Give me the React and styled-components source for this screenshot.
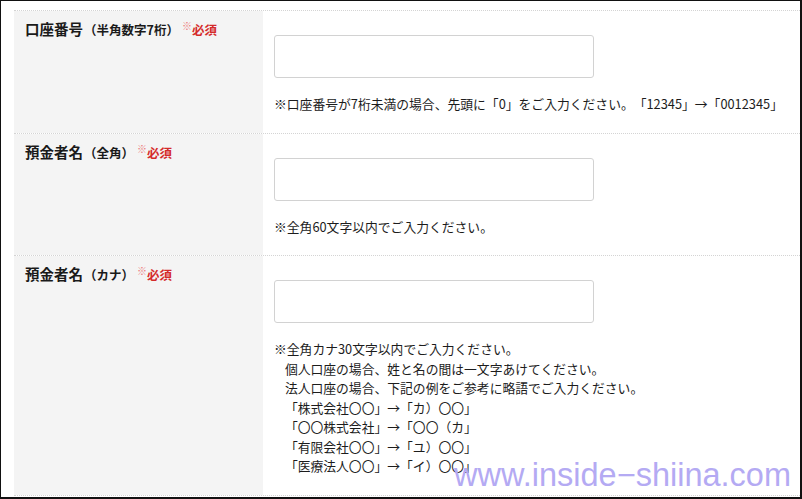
import React from 'react'
import styled, { createGlobalStyle } from 'styled-components'

const GlobalStyle = createGlobalStyle`
  html, body {
    margin: 0;
    padding: 0;
    background: #fff;
  }
  body {
    font-family: "Noto Sans CJK JP", "Noto Sans", sans-serif;
    color: #222;
    text-spacing-trim: space-all;
  }
`

const fields = [
  {
    id: 'number',
    label: '口座番号',
    sub: '（半角数字7桁）',
    notes: ['※口座番号が7桁未満の場合、先頭に「0」をご入力ください。「12345」→「0012345」'],
  },
  {
    id: 'kanji',
    label: '預金者名',
    sub: '（全角）',
    notes: ['※全角60文字以内でご入力ください。'],
  },
  {
    id: 'kana',
    label: '預金者名',
    sub: '（カナ）',
    notes: [
      '※全角カナ30文字以内でご入力ください。',
      '個人口座の場合、姓と名の間は一文字あけてください。',
      '法人口座の場合、下記の例をご参考に略語でご入力ください。',
      '「株式会社〇〇」→「カ）〇〇」',
      '「〇〇株式会社」→「〇〇（カ」',
      '「有限会社〇〇」→「ユ）〇〇」',
      '「医療法人〇〇」→「イ）〇〇」',
    ],
  },
]

const App = () => {
  return (
    <Page>
      <GlobalStyle />
      <Form>
        {fields.map((f) => (
          <Row key={f.id}>
            <LabelCell>
              <Label>
                {f.label}
                <Sub>{f.sub}</Sub>
                <Mark>※</Mark>
                <Required>必須</Required>
              </Label>
            </LabelCell>
            <InputCell>
              <Input type="text" />
              <Notes>
                {f.notes.map((n, i) => (
                  <Note key={i} $indent={i > 0}>{n}</Note>
                ))}
              </Notes>
            </InputCell>
          </Row>
        ))}
      </Form>
      <Watermark>www.inside−shiina.com</Watermark>
    </Page>
  )
}

const Page = styled.div`
  position: relative;
  box-sizing: border-box;
  width: 802px;
  height: 499px;
  overflow: hidden;
  border: 1px solid #111;
  border-bottom-width: 2px;
  border-right-width: 2px;
  padding: 9px 0 0 13px;
  background: #fff;
`

const Form = styled.div`
  display: flex;
  flex-direction: column;
  border-top: 1px dotted #d4d4d4;
`

const Row = styled.div`
  display: grid;
  grid-template-columns: 249px 1fr;
  border-bottom: 1px dotted #d4d4d4;
`

const LabelCell = styled.div`
  background: #f4f4f4;
  padding: 4px 11px 0;
`

const Label = styled.div`
  font-size: 14.5px;
  font-weight: 700;
  line-height: 22px;
  color: #1a1a1a;
  white-space: nowrap;
`

const Sub = styled.span`
  font-size: 12.5px;
  margin-left: 1px;
`

const Mark = styled.span`
  font-size: 10px;
  color: #ec7a7a;
  vertical-align: 5px;
  font-weight: 400;
  margin-left: 3px;
`

const Required = styled.span`
  font-size: 12.5px;
  color: #d42a2a;
`

const InputCell = styled.div`
  padding: 24px 11px 19px;
`

const Input = styled.input`
  display: block;
  box-sizing: border-box;
  width: 320px;
  height: 43px;
  border: 1px solid #d2d2d2;
  border-radius: 3px;
  background: #fff;
  margin: 0;
  outline: none;
`

const Notes = styled.div`
  margin-top: 16px;
  display: flex;
  flex-direction: column;
`

const Note = styled.p`
  margin: 0;
  font-size: 12.8px;
  line-height: 19.5px;
  color: #1c1c1c;
  padding-left: ${(p) => (p.$indent ? '0.85em' : '0')};
  white-space: nowrap;
`

const Watermark = styled.div`
  position: absolute;
  right: 9px;
  bottom: 2px;
  font-family: "Liberation Sans", Arial, sans-serif;
  font-size: 32.5px;
  line-height: 40px;
  color: #b4aaf3;
  pointer-events: none;
  white-space: nowrap;
`

export default App
